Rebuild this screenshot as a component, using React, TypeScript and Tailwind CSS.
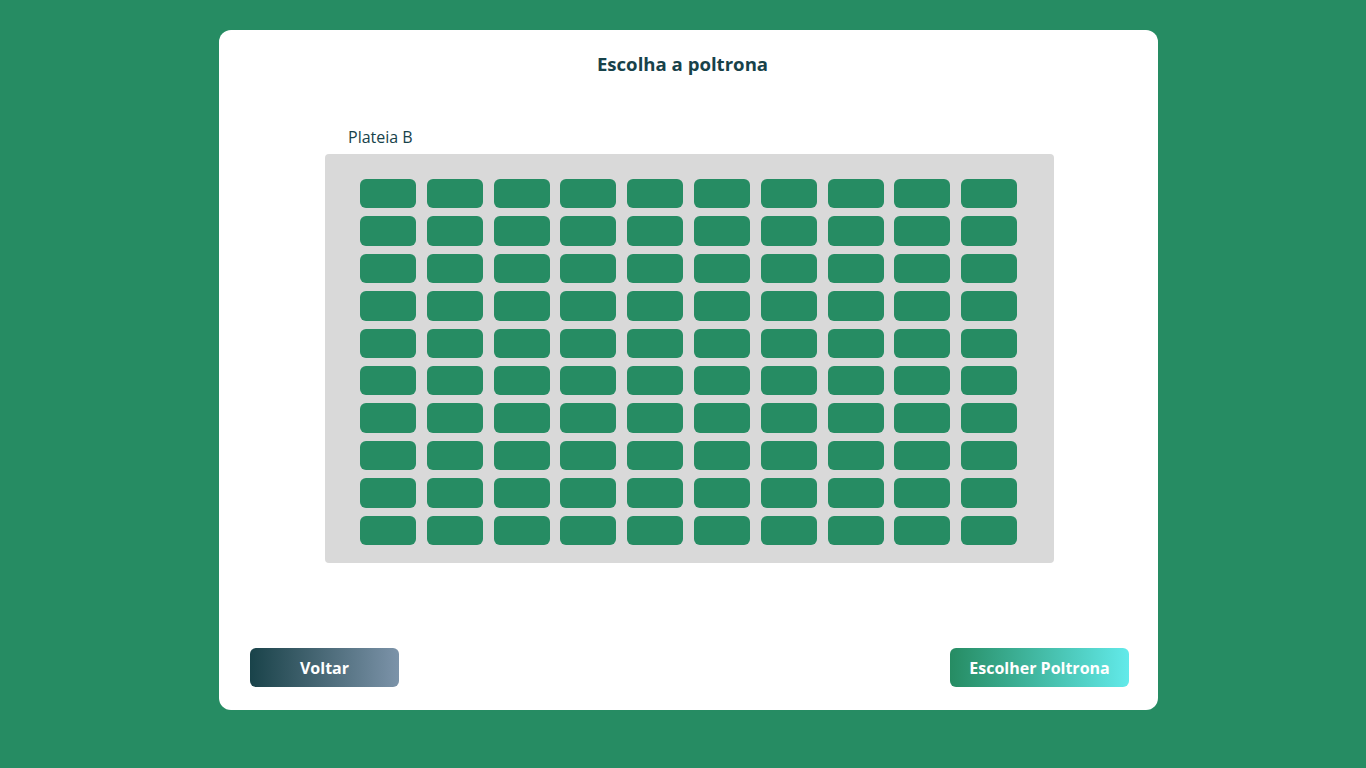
import React from "react";

export default function App() {
  const rows = Array.from({ length: 10 });
  const cols = Array.from({ length: 10 });
  return (
    <div className="min-h-screen w-full bg-[#268c63] flex justify-start pl-[219px] pt-[30px]" style={{ fontFamily: '"Open Sans", sans-serif' }}>
      <div className="w-[939px] h-[680px] bg-white rounded-[12px] flex flex-col">
        <h1 className="mt-[22px] h-[24px] pr-[12px] text-center text-[18.6px] leading-[24px] font-bold text-[#17424a]">Escolha a poltrona</h1>
        <div className="mt-[50px] ml-[129px] h-[22px] text-[16px] leading-[22px] text-[#17424a]">Plateia B</div>
        <div className="mt-[6px] ml-[106px] w-[729px] h-[409px] bg-[#d9d9d9] rounded-[4px] pt-[25px] pl-[35px]">
          <div className="flex flex-col gap-[8px]">
            {rows.map((_, r) => (
              <div key={r} className="flex gap-[10.8px]">
                {cols.map((_, c) => (
                  <div key={c} className="w-[56px] h-[29.4px] rounded-[6px] bg-[#268c63]" />
                ))}
              </div>
            ))}
          </div>
        </div>
        <div className="mt-[85px] flex justify-between pl-[31px] pr-[29px]">
          <button className="w-[149px] h-[39px] rounded-[6px] bg-gradient-to-r from-[#19434a] to-[#7c93a9] text-white font-bold text-[16px]">Voltar</button>
          <button className="w-[179px] h-[39px] rounded-[6px] bg-gradient-to-r from-[#268c63] to-[#62eaea] text-white font-bold text-[16px]">Escolher Poltrona</button>
        </div>
      </div>
    </div>
  );
}
